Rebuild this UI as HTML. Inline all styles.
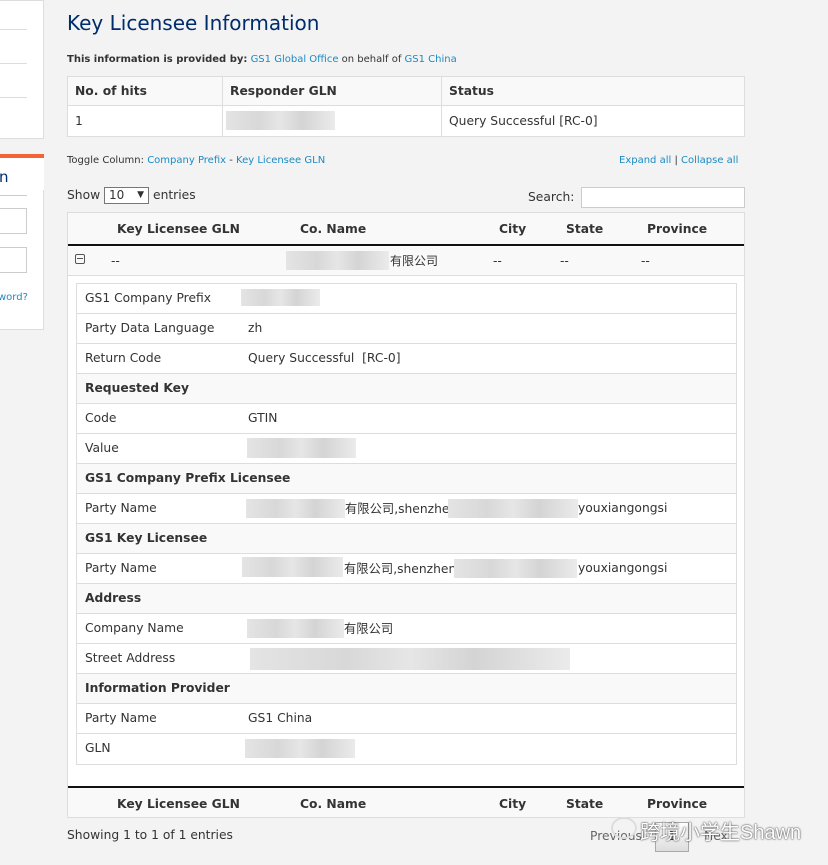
<!DOCTYPE html>
<html><head><meta charset="utf-8"><style>
*{box-sizing:border-box;margin:0;padding:0}
body{width:828px;height:865px;background:#f3f3f3;font-family:"DejaVu Sans","Liberation Sans","Noto Sans CJK SC",sans-serif;color:#333;font-size:12.3px;position:relative;overflow:hidden}
.a{position:absolute;white-space:nowrap}
.b{font-weight:bold}
.lk{color:#1a8bc4}
.cj{position:relative;top:-2px}
.blur{position:absolute;background:linear-gradient(90deg,#e4e4e4,#d8d8d8 30%,#e6e6e6 50%,#d4d4d4 70%,#ebebeb);}
.row{position:absolute;left:77px;width:659px;height:30px;border-bottom:1px solid #ddd;background:#fff}
.row.h{background:#f9f9f9;font-weight:bold}
.row span{position:absolute;top:7px;left:8px;white-space:nowrap}
.row span.v{left:171px}
</style></head><body>
<div class="a" style="left:-2px;top:0;width:46px;height:139px;background:#fff;border:1px solid #ddd"></div>
<div class="a" style="left:0;top:29px;width:27px;height:1px;background:#ddd"></div>
<div class="a" style="left:0;top:63px;width:27px;height:1px;background:#ddd"></div>
<div class="a" style="left:0;top:97px;width:27px;height:1px;background:#ddd"></div>
<div class="a" style="left:-2px;top:154px;width:46px;height:36px;background:#fff;border-top:4px solid #f26335"></div>
<div class="a" style="left:-2px;top:190px;width:46px;height:140px;background:#fff;border:1px solid #ddd;border-top:none"></div>
<div class="a" style="left:-1px;top:168px;font-size:15px;color:#002c6c">n</div>
<div class="a" style="left:0;top:195px;width:27px;height:1px;background:#ccc"></div>
<div class="a" style="left:-2px;top:208px;width:29px;height:26px;border:1px solid #ccc;background:#fff"></div>
<div class="a" style="left:-2px;top:247px;width:29px;height:26px;border:1px solid #ccc;background:#fff"></div>
<div class="a lk" style="left:-2px;top:292px;font-size:10px">word?</div>

<div class="a" style="left:67px;top:11px;font-size:20px;color:#002c6c">Key Licensee Information</div>
<div class="a" style="left:67px;top:54px;font-size:10px"><b>This information is provided by:</b> <span class="lk">GS1 Global Office</span> on behalf of <span class="lk">GS1 China</span></div>

<div class="a" style="left:67px;top:76px;width:678px;height:61px;border:1px solid #ddd;background:#fff"></div>
<div class="a" style="left:68px;top:77px;width:676px;height:29px;background:#f9f9f9;border-bottom:1px solid #ddd"></div>
<div class="a" style="left:222px;top:77px;width:1px;height:59px;background:#ddd"></div>
<div class="a" style="left:441px;top:77px;width:1px;height:59px;background:#ddd"></div>
<div class="a b" style="left:75px;top:84px">No. of hits</div>
<div class="a b" style="left:230px;top:84px">Responder GLN</div>
<div class="a b" style="left:449px;top:84px">Status</div>
<div class="a" style="left:75px;top:114px">1</div>
<div class="blur" style="left:226px;top:111px;width:109px;height:19px"></div>
<div class="a" style="left:449px;top:114px">Query Successful [RC-0]</div>

<div class="a" style="left:67px;top:155px;font-size:10px">Toggle Column: <span class="lk">Company Prefix</span> - <span class="lk">Key Licensee GLN</span></div>
<div class="a" style="left:619px;top:155px;font-size:10px"><span class="lk">Expand all</span> | <span class="lk">Collapse all</span></div>

<div class="a" style="left:67px;top:188px">Show</div>
<div class="a" style="left:104px;top:187px;width:45px;height:17px;border:1px solid #777;background:#fff;font-size:12px;padding-left:4px;line-height:15px">10 <span style="font-size:9px;position:absolute;right:4px">▼</span></div>
<div class="a" style="left:153px;top:188px">entries</div>
<div class="a" style="left:528px;top:190px">Search:</div>
<div class="a" style="left:581px;top:187px;width:164px;height:21px;border:1px solid #ccc;background:#fff"></div>

<div class="a" style="left:67px;top:212px;width:678px;height:606px;border:1px solid #ddd;background:#fff"></div>
<div class="a" style="left:68px;top:213px;width:676px;height:33px;background:#f9f9f9;border-bottom:2px solid #111"></div>
<div class="a b" style="left:117px;top:222px">Key Licensee GLN</div>
<div class="a b" style="left:300px;top:222px">Co. Name</div>
<div class="a b" style="left:499px;top:222px">City</div>
<div class="a b" style="left:566px;top:222px">State</div>
<div class="a b" style="left:647px;top:222px">Province</div>
<div class="a" style="left:68px;top:247px;width:676px;height:29px;background:#f9f9f9;border-bottom:1px solid #ddd"></div>
<div class="a" style="left:75px;top:254px;width:10px;height:10px;border:1px solid #555;border-radius:2px"></div>
<div class="a" style="left:77px;top:258px;width:6px;height:1px;background:#555"></div>
<div class="a" style="left:111px;top:254px">--</div>
<div class="blur" style="left:286px;top:251px;width:103px;height:19px"></div>
<div class="a" style="left:390px;top:252px;font-size:12px">有限公司</div>
<div class="a" style="left:493px;top:254px">--</div>
<div class="a" style="left:560px;top:254px">--</div>
<div class="a" style="left:641px;top:254px">--</div>

<div class="a" style="left:76px;top:283px;width:661px;height:482px;border:1px solid #ddd"></div>
<div class="row" style="top:284px"><span>GS1 Company Prefix</span></div>
<div class="blur" style="left:241px;top:289px;width:79px;height:17px"></div>
<div class="row" style="top:314px"><span>Party Data Language</span><span class="v">zh</span></div>
<div class="row" style="top:344px"><span>Return Code</span><span class="v">Query Successful&nbsp; [RC-0]</span></div>
<div class="row h" style="top:374px"><span>Requested Key</span></div>
<div class="row" style="top:404px"><span>Code</span><span class="v">GTIN</span></div>
<div class="row" style="top:434px"><span>Value</span></div>
<div class="blur" style="left:247px;top:438px;width:109px;height:20px"></div>
<div class="row h" style="top:464px"><span>GS1 Company Prefix Licensee</span></div>
<div class="row" style="top:494px"><span>Party Name</span><span class="v" style="left:268px;top:5px">有限公司,shenzhen</span><span class="v" style="left:501px">youxiangongsi</span></div>
<div class="blur" style="left:246px;top:499px;width:99px;height:19px"></div>
<div class="blur" style="left:448px;top:499px;width:130px;height:19px"></div>
<div class="row h" style="top:524px"><span>GS1 Key Licensee</span></div>
<div class="row" style="top:554px"><span>Party Name</span><span class="v" style="left:267px;top:5px">有限公司,shenzhen</span><span class="v" style="left:501px">youxiangongsi</span></div>
<div class="blur" style="left:242px;top:557px;width:101px;height:20px"></div>
<div class="blur" style="left:454px;top:559px;width:123px;height:19px"></div>
<div class="row h" style="top:584px"><span>Address</span></div>
<div class="row" style="top:614px"><span>Company Name</span><span class="v" style="left:267px;top:5px">有限公司</span></div>
<div class="blur" style="left:247px;top:619px;width:97px;height:19px"></div>
<div class="row" style="top:644px"><span>Street Address</span></div>
<div class="blur" style="left:250px;top:648px;width:320px;height:22px"></div>
<div class="row h" style="top:674px"><span>Information Provider</span></div>
<div class="row" style="top:704px"><span>Party Name</span><span class="v">GS1 China</span></div>
<div class="row" style="top:734px;border-bottom:none"><span>GLN</span></div>
<div class="blur" style="left:245px;top:739px;width:110px;height:19px"></div>

<div class="a" style="left:68px;top:786px;width:676px;height:31px;background:#f9f9f9;border-top:2px solid #111"></div>
<div class="a b" style="left:117px;top:797px">Key Licensee GLN</div>
<div class="a b" style="left:300px;top:797px">Co. Name</div>
<div class="a b" style="left:499px;top:797px">City</div>
<div class="a b" style="left:566px;top:797px">State</div>
<div class="a b" style="left:647px;top:797px">Province</div>

<div class="a" style="left:67px;top:828px">Showing 1 to 1 of 1 entries</div>
<div class="a" style="left:590px;top:829px;color:#666">Previous</div>
<div class="a" style="left:655px;top:822px;width:34px;height:30px;border:1px solid #aaa;background:linear-gradient(#fff,#ddd)"></div>
<div class="a" style="left:668px;top:829px">1</div>
<div class="a" style="left:704px;top:829px;color:#666">Next</div>
<div class="a" style="left:611px;top:817px;width:26px;height:22px;border-radius:50%;border:2px solid #ddd"></div>
<div class="a" style="left:640px;top:816px;font-size:20px;color:#fff;text-shadow:0 0 2px #555,0 0 1px #333;font-family:'Liberation Sans','Noto Sans CJK SC',sans-serif">跨境小学生Shawn</div>
</body></html>
